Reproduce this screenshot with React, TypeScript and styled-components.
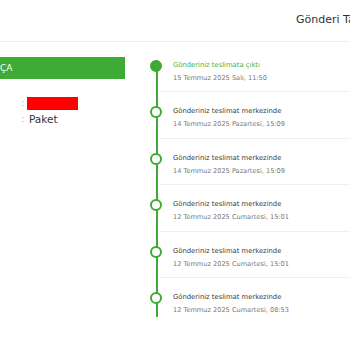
import React from "react";
import styled, { createGlobalStyle } from "styled-components";

const Global = createGlobalStyle`
  html, body { margin: 0; padding: 0; background: #fff; }
  body { font-family: "DejaVu Sans", "Lato", sans-serif; color: #333; overflow: hidden; }
`;

const Page = styled.div`
  width: 350px;
  height: 350px;
  overflow: hidden;
`;

const Header = styled.header`
  height: 41px;
  border-bottom: 1px solid #efefef;
  display: flex;
  align-items: center;
  padding-left: 296px;
  white-space: nowrap;
  overflow: hidden;
`;

const Title = styled.h1`
  margin: 0;
  font-size: 11px;
  font-weight: 400;
  color: #333;
  padding-bottom: 3px;
`;

const Main = styled.main`
  display: grid;
  grid-template-columns: 125px 1fr;
  column-gap: 32px;
`;

const Side = styled.section`
  padding-top: 15px;
`;

const Bar = styled.div`
  height: 22px;
  background: #3dab36;
  color: #fff;
  font-size: 9px;
  display: flex;
  align-items: center;
`;

const Info = styled.div`
  padding-top: 16px;
  padding-left: 21px;
  display: grid;
  grid-template-columns: 6px auto;
  align-items: center;
`;

const Colon = styled.span`
  font-size: 9px;
  color: #aaa;
  line-height: 16px;
`;

const Value = styled.span<{ $pad?: number }>`
  font-size: 10.5px;
  line-height: 16px;
  color: #333;
  padding-left: ${(p) => p.$pad ?? 0}px;
`;

const Redacted = styled.span`
  display: block;
  width: 51px;
  height: 13px;
  background: #ff0000;
`;

const List = styled.ol`
  list-style: none;
  margin: 4px 0 0 0;
  padding: 0;
  position: relative;
  &::before {
    content: "";
    position: absolute;
    left: -1px;
    top: 14px;
    bottom: 7px;
    width: 2px;
    background: #3dab36;
  }
`;

const Item = styled.li<{ $last?: boolean }>`
  position: relative;
  height: 46.4px;
  box-sizing: border-box;
  margin-left: 3px;
  padding: 13px 0 0 13px;
  border-bottom: ${(p) => (p.$last ? "none" : "1px solid #f0f0f0")};
`;

const Dot = styled.span<{ $filled?: boolean }>`
  position: absolute;
  left: -10px;
  top: 14px;
  width: 12px;
  height: 12px;
  box-sizing: border-box;
  border-radius: 50%;
  border: 2px solid #3dab36;
  background: ${(p) => (p.$filled ? "#3dab36" : "#fff")};
`;

const ItemTitle = styled.div<{ $active?: boolean }>`
  font-size: 6.8px;
  line-height: 13px;
  color: ${(p) => (p.$active ? "#4caf43" : "#3a3a3a")};
  white-space: nowrap;
`;

const ItemDate = styled.div`
  font-size: 6.6px;
  line-height: 12px;
  color: #777;
  white-space: nowrap;
`;

const events = [
  { t: "Gönderiniz teslimata çıktı", d: "15 Temmuz 2025 Salı, 11:50", active: true },
  { t: "Gönderiniz teslimat merkezinde", d: "14 Temmuz 2025 Pazartesi, 15:09" },
  { t: "Gönderiniz teslimat merkezinde", d: "14 Temmuz 2025 Pazartesi, 15:09" },
  { t: "Gönderiniz teslimat merkezinde", d: "12 Temmuz 2025 Cumartesi, 15:01" },
  { t: "Gönderiniz teslimat merkezinde", d: "12 Temmuz 2025 Cumartesi, 15:01" },
  { t: "Gönderiniz teslimat merkezinde", d: "12 Temmuz 2025 Cumartesi, 08:53" },
];

export default function App() {
  return (
    <Page>
      <Global />
      <Header>
        <Title>Gönderi Takip</Title>
      </Header>
      <Main>
        <Side>
          <Bar>ÇA</Bar>
          <Info>
            <Colon>:</Colon>
            <Value>
              <Redacted />
            </Value>
            <Colon>:</Colon>
            <Value $pad={2}>Paket</Value>
          </Info>
        </Side>
        <List>
          {events.map((e, i) => (
            <Item key={i} $last={i === events.length - 1}>
              <Dot $filled={e.active} />
              <ItemTitle $active={e.active}>{e.t}</ItemTitle>
              <ItemDate>{e.d}</ItemDate>
            </Item>
          ))}
        </List>
      </Main>
    </Page>
  );
}
